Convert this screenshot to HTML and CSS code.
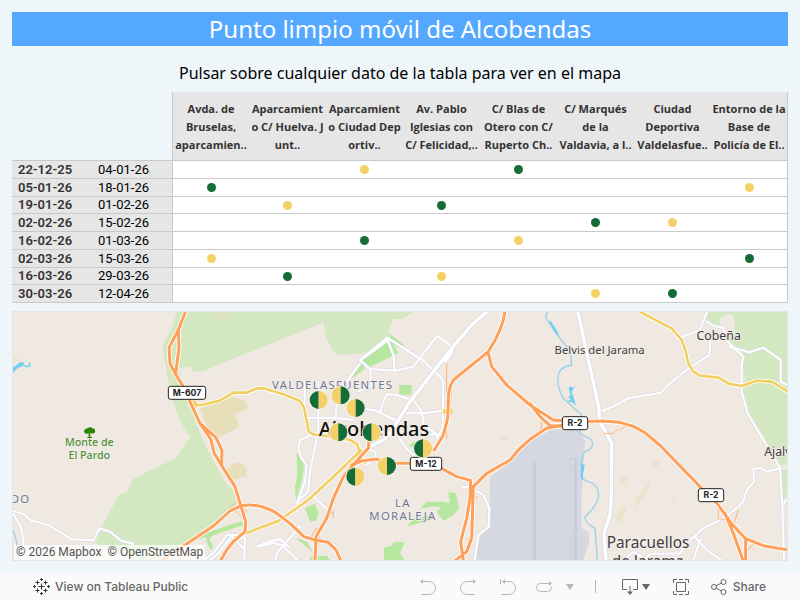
FILE: index.html
```html
<!DOCTYPE html>
<html lang="es">
<head>
<meta charset="utf-8">
<meta name="viewport" content="width=device-width, initial-scale=1">
<title>Punto limpio móvil de Alcobendas</title>
<link rel="stylesheet" href="styles.css">
</head>
<body>
<main class="dashboard">
  <h1 class="title">Punto limpio móvil de Alcobendas</h1>
  <p class="subtitle">Pulsar sobre cualquier dato de la tabla para ver en el mapa</p>

  <table class="schedule">
    <colgroup>
      <col class="col-date"><col class="col-date">
      <col><col><col><col><col><col><col><col>
    </colgroup>
    <thead>
      <tr>
        <td class="corner" colspan="2"></td>
        <th scope="col">Avda. de<br>Bruselas,<br>aparcamien..</th>
        <th scope="col">Aparcamient<br>o C/ Huelva. J<br>unt..</th>
        <th scope="col">Aparcamient<br>o Ciudad Dep<br>ortiv..</th>
        <th scope="col">Av. Pablo<br>Iglesias con<br>C/ Felicidad,..</th>
        <th scope="col">C/ Blas de<br>Otero con C/<br>Ruperto Ch..</th>
        <th scope="col">C/ Marqués<br>de la<br>Valdavia, a l..</th>
        <th scope="col">Ciudad<br>Deportiva<br>Valdelasfue..</th>
        <th scope="col">Entorno de la<br>Base de<br>Policía de El..</th>
      </tr>
    </thead>
    <tbody>
      <tr><th scope="row">22-12-25</th><td class="until">04-01-26</td><td></td><td></td><td><i class="dot yellow"></i></td><td></td><td><i class="dot green"></i></td><td></td><td></td><td></td></tr>
      <tr><th scope="row">05-01-26</th><td class="until">18-01-26</td><td><i class="dot green"></i></td><td></td><td></td><td></td><td></td><td></td><td></td><td><i class="dot yellow"></i></td></tr>
      <tr><th scope="row">19-01-26</th><td class="until">01-02-26</td><td></td><td><i class="dot yellow"></i></td><td></td><td><i class="dot green"></i></td><td></td><td></td><td></td><td></td></tr>
      <tr><th scope="row">02-02-26</th><td class="until">15-02-26</td><td></td><td></td><td></td><td></td><td></td><td><i class="dot green"></i></td><td><i class="dot yellow"></i></td><td></td></tr>
      <tr><th scope="row">16-02-26</th><td class="until">01-03-26</td><td></td><td></td><td><i class="dot green"></i></td><td></td><td><i class="dot yellow"></i></td><td></td><td></td><td></td></tr>
      <tr><th scope="row">02-03-26</th><td class="until">15-03-26</td><td><i class="dot yellow"></i></td><td></td><td></td><td></td><td></td><td></td><td></td><td><i class="dot green"></i></td></tr>
      <tr><th scope="row">16-03-26</th><td class="until">29-03-26</td><td></td><td><i class="dot green"></i></td><td></td><td><i class="dot yellow"></i></td><td></td><td></td><td></td><td></td></tr>
      <tr><th scope="row">30-03-26</th><td class="until">12-04-26</td><td></td><td></td><td></td><td></td><td></td><td><i class="dot yellow"></i></td><td><i class="dot green"></i></td><td></td></tr>
    </tbody>
  </table>

  <section class="map">
    <svg class="map-canvas" viewBox="39 21 2322 744" preserveAspectRatio="xMidYMid slice">
      <defs>
        <g id="streets">
          <path d="M39 618L72 628 90 645 145 660 215 703 280 706 298 670 330 680 365 708 400 716M39 625L62 665 70 700 70 766"/>
          <path d="M610 766L640 745 680 690 720 690 735 700 733 766M630 766L655 745 690 700M690 690L735 735M768 725L800 712 840 702 865 725M780 724L820 714 846 720 895 768M826 766L830 745 900 664"/>
          <path d="M1165 100L1250 155 1265 163 1320 215 1330 230 1328 370 1310 400M1160 98L1180 150 1184 195M1160 100L1080 165 1110 192 1184 197 1240 185 1312 92 1355 125M1164 105L1120 138 1080 165M1110 192L1115 240 1075 260M1080 175L1030 245 1010 300 1006 340M1220 325L1270 325 1325 318M1240 285L1265 320 1272 360 1310 388"/>
          <path d="M914 338L1000 338 1060 345M914 230L914 338M955 230L955 380 900 405 895 430 905 460 920 480 915 530 893 590 892 620M950 400L930 500 925 560 895 585M1140 320L1150 290 1160 268 1190 270 1235 285M1090 310L1130 318 1200 352M1180 370L1215 425 1245 455M1245 390L1310 388M1100 430L1125 440 1128 458 1100 478M940 575L990 620"/>
          <path d="M1385 545L1410 546 1450 570 1468 610 1466 665 1435 690 1424 766"/>
          <path d="M2122 18L2100 75 2030 102M2122 50L2135 60 2170 70 2178 105 2230 155 2225 180 2225 260 2243 325 2340 488 2347 600 2352 766M2188 125L2248 142 2290 128 2342 165 2342 230 2364 242M2132 95L2128 150 2060 195 2015 230 1982 263 1930 272 1885 280 1840 305 1805 318"/>
          <path d="M2340 490L2300 500 2280 488 2260 493 2262 530 2240 555 2230 590 2200 618 2160 645 2110 670 2060 715 2040 745 1950 748 1930 766M2085 695L2120 735 2165 766M2100 705L2080 766M2364 580L2347 600M1870 766L1900 740 1930 760"/>
        </g>
        <g id="avenues">
          <path d="M1462 18L1415 60 1355 130 1230 290 1180 370 1155 402 1100 430M1358 130L1350 150 1336 168"/>
          <path d="M1733 18L1765 165 1795 300 1800 350 1835 415 1834 570 1830 630 1812 685 1818 766"/>
        </g>
        <g id="yellow-roads">
          <path d="M570 300H605L660 287 700 263H740L770 250H790L850 268 900 288 912 308 926 378 940 388 1000 396 1050 405 1072 418 1080 450 1096 474"/>
          <path d="M735 686L780 668 835 648 925 585 1000 515 1060 458 1084 436"/>
          <path d="M1915 18L2015 70 2045 105Q2060 140 2065 175L2080 200 2100 212 2155 218 2190 237 2225 243 2270 227 2315 230 2364 260"/>
        </g>
        <g id="motorways">
          <path d="M557 18L535 75 507 128 510 175 525 205 550 245 570 290 600 355 632 402 642 443 665 482 705 545 722 600 737 650 735 680 700 710 680 735 662 766M535 75L537 130 527 205M600 355L648 398 666 437 665 482"/>
          <path d="M485 766L555 720 640 663 690 618 725 602Q780 594 830 625L870 655 912 695 945 705 985 712 1008 735 1022 766"/>
          <path d="M945 766L948 695 980 640 1000 580 1030 515 1068 470 1106 428V412M1055 480L1085 468 1130 462 1160 475H1230L1325 490 1370 515 1412 526 1410 580 1400 640 1382 710 1390 766M1366 766L1400 740 1415 700 1420 545"/>
          <path d="M1420 545L1460 505 1530 465 1560 430 1590 403 1640 370 1690 360 1740 350 1805 348 1860 352 1900 364 1935 383 1982 423 2100 545 2155 600 2190 650 2235 700 2290 722 2364 735M2175 625L2200 685 2229 766M2237 700V766"/>
          <path d="M1515 18Q1510 70 1465 140L1360 225Q1344 250 1345 290L1343 340 1330 390 1303 435M1465 145L1475 185 1520 240 1590 300 1660 345 1720 350M1590 296L1620 335 1650 362 1700 364"/>
        </g>
        <g id="pin-green-left">
          <circle class="pin-ring" r="30"/>
          <path class="fill-green" d="M0-27A27 27 0 0 0 0 27Z"/>
          <path class="fill-yellow" d="M0-27A27 27 0 0 1 0 27Z"/>
        </g>
        <g id="pin-green-right">
          <circle class="pin-ring" r="30"/>
          <path class="fill-yellow" d="M0-27A27 27 0 0 0 0 27Z"/>
          <path class="fill-green" d="M0-27A27 27 0 0 1 0 27Z"/>
        </g>
      </defs>

      <rect class="land" x="0" y="0" width="2400" height="790"/>

      <g class="forest">
        <path d="M530 18L520 60 487 125 500 200 510 260 530 320 555 375 572 397 524 463 450 495 397 525 380 563 358 568 310 655 285 715 400 766H500L640 663 710 600 700 555 678 535 620 430 590 360 570 290 550 240 535 190 575 185 578 200 610 198 780 128 972 52 975 90 1000 140 1020 150 1095 145 1160 125 1165 75 1180 42 1210 42 1240 18Z"/>
        <path d="M2124 18L2118 45 2140 62 2168 62 2180 100 2200 130 2225 165 2235 220 2228 260 2245 320 2335 480 2364 480V18ZM2340 500L2364 490V560L2348 590Z"/>
      </g>
      <path class="land" d="M2158 42L2175 28 2200 30 2204 60 2200 90 2180 100 2165 75Z"/>
      <g class="sand">
        <path d="M600 310L640 295 700 275 740 290 743 310 705 328 718 365 655 400 620 370Z"/>
        <path d="M682 495L700 475 720 472 740 490V513L712 520 700 528Z"/>
        <path class="faint" d="M638 18H692L665 52ZM40 160L55 155 50 165 40 168ZM1496 398H1520L1524 406 1510 412ZM1910 575L1950 530 1948 550 1920 590 1905 617ZM1862 520L1880 515 1885 545 1862 540ZM1870 600L1880 620 1855 655 1845 635ZM2015 580L2028 575 2022 595ZM1960 470L1975 465V485H1960Z"/>
      </g>
      <g class="park">
        <path d="M1160 80L1213 120 1200 130 1180 118 1195 145 1110 185 1085 178 1080 165 1110 140 1175 105ZM1050 220L1085 175 1095 190 1065 215ZM1197 240L1236 240 1234 270 1197 268ZM1227 420L1245 408 1255 430 1240 428ZM890 445L905 455 912 485 905 530 888 585 885 545 892 510ZM915 610L945 597 955 625 950 645 930 650Z"/>
        <path d="M1260 612L1280 590 1320 590 1350 594 1345 560 1368 565 1377 610 1360 630 1330 648 1310 620 1325 606 1300 604ZM1222 664L1240 640 1300 632 1295 645ZM1152 728L1175 722 1180 712 1214 712 1200 745 1214 766H1152ZM885 697L920 710 940 745 925 730ZM930 756L980 752 990 766H930Z"/>
        <path d="M600 690L725 648 730 660 640 690 628 700 640 725 632 735 620 710 618 695 570 712Z"/>
      </g>
      <path class="airport" d="M1470 515L1520 480 1560 440 1600 400 1660 372 1738 374 1756 410 1750 480 1745 560V670L1766 680 1768 710 1750 766H1426L1436 690 1468 665Z"/>
      <path class="runway" d="M1603 470V766M1727 460V766"/>
      <path class="runway-thin" d="M1603 570H1587M1727 490L1710 485V460H1727M1725 680L1712 700V766"/>
      <path class="river" d="M1645 18Q1630 35 1645 50L1680 100 1712 140 1715 180Q1680 185 1675 210 1668 240 1690 280L1745 330 1738 360 1740 385 1775 405Q1785 430 1755 440 1740 460 1745 490 1740 525 1765 530 1800 540 1795 580 1785 610 1755 635 1755 655 1785 670L1792 766M39 675L50 710 55 766"/>
      <g class="water">
        <path d="M39 188L60 172 72 172 70 182 52 190 39 204ZM1650 45L1662 62 1675 85 1678 98 1660 75 1648 52ZM1704 275L1712 272 1706 250 1710 244 1720 248 1728 240 1715 262 1720 275 1728 300 1716 292 1702 290 1712 284ZM1743 475L1754 480 1750 505 1748 528 1742 520Z"/>
        <path class="stream" d="M70 180L80 185 90 182 88 172"/>
      </g>

      <use href="#streets" class="road street-case"/>
      <use href="#streets" class="road street"/>
      <use href="#avenues" class="road avenue-case"/>
      <use href="#avenues" class="road avenue"/>
      <use href="#yellow-roads" class="road major-case"/>
      <use href="#yellow-roads" class="road yellow-road"/>
      <path class="ramp" d="M1340 175V400M1347 240L1356 240 1350 300M1465 140L1475 115M1405 190Q1460 140 1468 150L1478 185M680 620L715 585 740 620 725 635 700 612M930 700L950 670 960 700 950 730M985 635L1000 618V640M1590 400Q1630 390 1625 345M1860 375L1885 358 1895 362M1810 385L1840 385 1855 370M2155 600V640L2175 645M2215 615L2200 660M2237 745Q2250 720 2275 710M1405 700L1412 720M1425 580L1435 575"/>
      <path class="fill-yellow" d="M1328 312H1358V326H1328ZM566 292L582 285 596 300 584 310 568 305Z"/>
      <use href="#motorways" class="road motorway-case"/>
      <use href="#motorways" class="road motorway"/>

      <g class="label district">
        <text x="998" y="252">VALDELASFUENTES</text>
        <text x="1209" y="605">LA</text>
        <text x="1209" y="645">MORALEJA</text>
        <text x="62" y="594">DO</text>
      </g>
      <g class="label town">
        <text x="1799" y="146">Belvis del Jarama</text>
        <text class="town-mid" x="2156" y="105">Cobeña</text>
        <text class="town-mid" x="2346" y="452">Ajalvir</text>
        <text class="town-large" x="1944" y="730">Paracuellos</text>
        <text class="town-large" x="1944" y="785">de Jarama</text>
      </g>
      <text class="label city" x="1122" y="392">Alcobendas</text>
      <g class="label nature">
        <text x="268" y="423">Monte de</text>
        <text x="268" y="461">El Pardo</text>
      </g>
      <path class="tree" d="M254 384Q248 374 262 370 270 363 278 370 288 372 285 382 280 388 271 384V396H276V399H262V396H266V385Q258 388 254 384Z"/>

      <g class="shield">
        <rect x="505" y="244" width="112" height="39" rx="7"/><text x="561" y="273">M-607</text>
        <rect x="1231" y="457" width="94" height="39" rx="7"/><text x="1278" y="486">M-12</text>
        <rect x="1687" y="335" width="76" height="39" rx="7"/><text x="1725" y="364">R-2</text>
        <rect x="2095" y="551" width="76" height="39" rx="7"/><text x="2133" y="580">R-2</text>
      </g>

      <g>
        <use href="#pin-green-left" x="956" y="285"/>
        <use href="#pin-green-right" x="1022" y="271"/>
        <use href="#pin-green-right" x="1067" y="309"/>
        <use href="#pin-green-right" x="1015" y="382"/>
        <use href="#pin-green-left" x="1115" y="382"/>
        <use href="#pin-green-left" x="1269" y="430"/>
        <use href="#pin-green-right" x="1161" y="483"/>
        <use href="#pin-green-left" x="1066" y="515"/>
      </g>
    </svg>
    <div class="attribution"><a href="#mapbox">© 2026 Mapbox</a><a href="#osm">© OpenStreetMap</a></div>
  </section>
</main>

<footer class="toolbar">
  <a class="brand" href="#tableau-public">
    <svg width="17" height="17" viewBox="0 0 17 17" class="icon logo"><path d="M8.500 5.500V11.500M5.500 8.500H11.500M4.500 2.500V6.500M2.500 4.500H6.500M12.500 2.500V6.500M10.500 4.500H14.500M4.500 10.500V14.500M2.500 12.500H6.500M12.500 10.500V14.500M10.500 12.500H14.500M8.500 0V3M7 1.500H10M8.500 14V17M7 15.500H10M1.500 7V10M0 8.500H3M15.500 7V10M14 8.500H17"/></svg>
    <span>View on Tableau Public</span>
  </a>
  <div class="tools">
    <div class="history">
      <button type="button" aria-label="Undo"><svg class="icon" width="16" height="16" viewBox="0 0 16 16"><path d="M1 2.500H9A6.500 6.500 0 0 1 9 15.500H1"/><path class="solid" d="M0 2.500L3 0V5Z"/></svg></button>
      <button type="button" aria-label="Redo"><svg class="icon" width="16" height="16" viewBox="0 0 16 16"><path d="M15 2.500H7A6.500 6.500 0 0 0 7 15.500H15"/><path class="solid" d="M16 2.500L13 0V5Z"/></svg></button>
      <button type="button" aria-label="Revert"><svg class="icon" width="16" height="16" viewBox="0 0 16 16"><path d="M.500 0V5M3 2.500H9A6.500 6.500 0 0 1 9 15.500H1"/><path class="solid" d="M2 2.500L5 0V5Z"/></svg></button>
    </div>
    <button class="refresh" type="button" aria-label="Refresh"><svg class="icon" width="16" height="16" viewBox="0 0 16 16"><path d="M14 4.500H4.500A4 4 0 0 0 4.500 12.500H11.500A4 4 0 0 0 15.500 8.500V7.500"/><path class="solid" d="M16 4.500L13 2V7Z"/></svg></button>
    <button class="refresh-menu" type="button" aria-label="Refresh options"><svg class="icon" width="8" height="6" viewBox="0 0 8 6"><path class="solid" d="M0 0H8L4 6Z"/></svg></button>
    <span class="divider"></span>
    <button class="download" type="button" aria-label="Download"><svg class="icon" width="16" height="16" viewBox="0 0 16 16"><path d="M5 10.500H.500V.500H15.500V10.500H11M8 7V14"/><path class="solid" d="M5 12.500H11L8 16Z"/></svg><svg class="icon" width="8" height="6" viewBox="0 0 8 6"><path class="solid" d="M0 0H8L4 6Z"/></svg></button>
    <button class="fullscreen" type="button" aria-label="Full screen"><svg class="icon" width="16" height="16" viewBox="0 0 16 16"><path d="M3.500 3.500H12.500V12.500H3.500ZM.500 4V.500H4M6 .500H10M12 .500H15.500V4M15.500 12V15.500H12M10 15.500H6M4 15.500H.500V12"/></svg></button>
    <button class="share" type="button"><svg class="icon" width="16" height="16" viewBox="0 0 16 16"><circle cx="3" cy="8" r="2.500"/><circle cx="12.500" cy="3" r="2.500"/><circle cx="12.500" cy="13" r="2.500"/><path d="M5.200 6.800L10.200 4.200M5.200 9.200L10.200 11.800"/></svg><span>Share</span></button>
  </div>
</footer>
</body>
</html>
```
FILE: styles.css
```css
* {
  box-sizing: border-box;
}

body {
  margin: 0;
  min-height: 100vh;
  display: flex;
  flex-direction: column;
  background: #eef6fa;
  font-family: "Noto Sans", "Open Sans", sans-serif;
  font-size: 12px;
  color: #000;
}

.dashboard {
  flex: 1;
  display: flex;
  flex-direction: column;
  padding: 12px;
}

.title {
  margin: 0;
  background: #55a8ff;
  color: #fff;
  font-size: 24px;
  font-weight: 400;
  line-height: 34px;
  text-align: center;
}

.subtitle {
  margin: 16px 0 8px;
  font-size: 16px;
  line-height: 22px;
  text-align: center;
}

/* Schedule */

.schedule {
  width: 100%;
  table-layout: fixed;
  border-collapse: separate;
  border-spacing: 0;
}

.col-date {
  width: 80px;
}

.schedule th,
.schedule td {
  padding: 0;
  border-bottom: 1px solid #c9c9cb;
  white-space: nowrap;
}

.schedule thead th {
  height: 69px;
  padding: 8px 0 6px;
  background: #e6e6e6;
  color: #333;
  font-family: "Open Sans", "Noto Sans", sans-serif;
  font-size: 11px;
  font-weight: 700;
  line-height: 18px;
  vertical-align: top;
}

.schedule thead th:last-child,
.schedule tbody td:last-child {
  border-right: 1px solid #c9c9cb;
}

.schedule thead th:nth-child(2),
.schedule tbody td:nth-child(3) {
  border-left: 1px solid #c9c9cb;
}

.schedule tbody th,
.schedule tbody td {
  height: 18px;
  background: #fff;
  line-height: 16px;
  text-align: center;
}

.schedule tbody tr:nth-child(4n + 3) > * {
  height: 17px;
}

.schedule tbody th,
.schedule tbody .until {
  background: #e6e6e6;
  padding-left: 6px;
  font-family: Roboto, sans-serif;
  font-size: 13px;
  text-align: left;
}

.schedule tbody th {
  color: #333;
  font-weight: 600;
}

.dot {
  display: block;
  width: 9px;
  height: 9px;
  margin: 0 auto;
  border-radius: 50%;
}

.green {
  background: #146c36;
}

.yellow {
  background: #f4d166;
}

/* Map */

.map {
  position: relative;
  flex: 1 1 250px;
  display: flex;
  margin-top: 8px;
  border: 1px solid #e2e4e6;
  overflow: hidden;
}

.map-canvas {
  flex: 1;
  width: 100%;
  min-height: 248px;
}

.land { fill: #efe9e1; }
.forest { fill: #d3e7c0; }
.sand { fill: #e6dfb9; }
.faint { opacity: 0.5; }
.park { fill: #b5e79e; }
.airport { fill: #d5d8e1; }
.runway { fill: none; stroke: #c9cbdf; stroke-width: 9; }
.runway-thin { fill: none; stroke: #c9cbdf; stroke-width: 3; }
.river { fill: none; stroke: #9bd0ea; stroke-width: 4; }
.water { fill: #73cef4; }
.stream { fill: none; stroke: #73cef4; stroke-width: 4; }

.road { fill: none; stroke-linejoin: round; stroke-linecap: round; }
.street-case { stroke: #dcdce9; stroke-width: 10; }
.street { stroke: #fff; stroke-width: 6; }
.avenue-case { stroke: #dcdce9; stroke-width: 15; }
.avenue { stroke: #fff; stroke-width: 10; }
.major-case { stroke: #fff; stroke-width: 13; }
.yellow-road { stroke: #f1cf62; stroke-width: 8; }
.motorway-case { stroke: #fff; stroke-width: 14; }
.motorway { stroke: #ffa05a; stroke-width: 9; }
.ramp { fill: none; stroke: #ffb27c; stroke-width: 3; }

.label {
  text-anchor: middle;
  paint-order: stroke;
  stroke: #f4efea;
  stroke-width: 5;
  stroke-linejoin: round;
}

.district { fill: #6f7799; font-size: 34px; letter-spacing: 4px; }
.town { fill: #3d3d42; font-size: 34px; }
.town-mid { font-size: 37px; }
.town-large { font-size: 46px; }
.city { fill: #111; font-size: 60px; font-weight: 500; }
.nature { fill: #4f8f35; font-size: 32px; font-weight: 500; }
.tree { fill: #2b8300; }

.shield rect { fill: #fff; stroke: #222; stroke-width: 3; }
.shield text {
  fill: #222;
  font-family: Inter, sans-serif;
  font-size: 26px;
  font-weight: 700;
  text-anchor: middle;
}

.pin-ring { fill: #f4efe6; opacity: 0.9; }
.fill-green { fill: #146c36; }
.fill-yellow { fill: #f4d166; }

.attribution {
  position: absolute;
  left: 1px;
  bottom: 0;
  display: flex;
  gap: 6px;
  padding: 0 2px;
  background: rgba(255, 255, 255, 0.75);
  font-family: Roboto, sans-serif;
  font-size: 12px;
  line-height: 15px;
}

.attribution a {
  color: #555;
  text-decoration: none;
}

/* Toolbar */

.toolbar {
  display: flex;
  align-items: center;
  justify-content: space-between;
  height: 27px;
  padding: 0 34px 0 33px;
  background: #fafafa;
  color: #666;
  font-family: Inter, sans-serif;
  font-size: 12px;
  font-weight: 500;
}

.brand,
.tools,
.history,
.toolbar button {
  display: flex;
  align-items: center;
}

.brand {
  gap: 5px;
  color: inherit;
  text-decoration: none;
}

.toolbar button {
  padding: 0;
  border: 0;
  background: none;
  color: inherit;
  font: inherit;
}

.icon {
  display: block;
  fill: none;
  stroke: currentColor;
}

.logo { color: #333; }
.solid { fill: currentColor; stroke: none; }

.history { gap: 24px; }

.toolbar .history button,
.toolbar .refresh,
.toolbar .refresh-menu {
  color: #b8b8b8;
}

.toolbar .refresh { margin-left: 20px; }
.toolbar .refresh-menu { margin-left: 14px; }

.divider {
  width: 1px;
  height: 13px;
  margin: 0 26px 0 21px;
  background: #b8b8b8;
}

.toolbar .download { gap: 4px; }
.toolbar .fullscreen { margin-left: 23px; }
.toolbar .share { gap: 6px; margin-left: 22px; }
```
